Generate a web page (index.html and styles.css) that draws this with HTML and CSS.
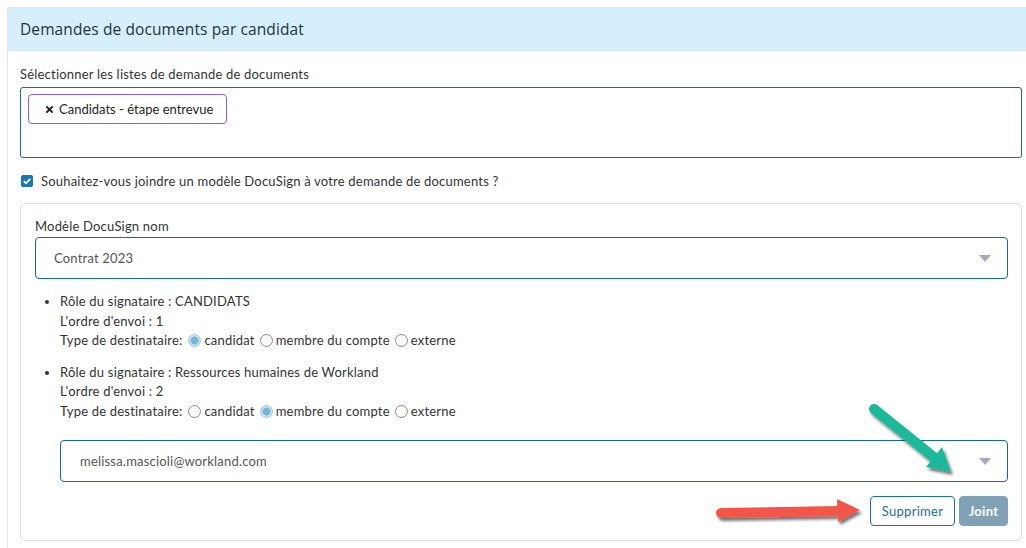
FILE: index.html
```html
<!DOCTYPE html>
<html>
<head>
  <meta charset="utf-8">
  <title>Demandes de documents</title>
  <link rel="stylesheet" href="styles.css">
</head>
<body>
  <div class="card">
    <div class="card-header">Demandes de documents par candidat</div>

    <div class="card-body">
      <label class="field-label">Sélectionner les listes de demande de documents</label>
      <div class="multi-select">
        <span class="tag">
          <svg class="tag-remove" viewBox="0 0 10 10"><path d="M1.5 1.5l7 7M8.5 1.5l-7 7"/></svg>
          Candidats - étape entrevue
        </span>
      </div>

      <label class="check-row">
        <span class="checkbox">
          <svg viewBox="0 0 12 12"><path d="M2.8 6.2l2.2 2.1 4.2-4.4"/></svg>
        </span>
        Souhaitez-vous joindre un modèle DocuSign à votre demande de documents ?
      </label>

      <!-- DocuSign panel -->
      <div class="docusign-panel">
        <label class="field-label">Modèle DocuSign nom</label>
        <div class="select-box">
          <span>Contrat 2023</span>
          <span class="caret"></span>
        </div>

        <ul class="signer-list">
          <li>
            <div>Rôle du signataire : CANDIDATS</div>
            <div>L'ordre d'envoi : 1</div>
            <div class="radio-row">
              Type de destinataire:
              <span class="radio checked"></span>candidat
              <span class="radio"></span>membre du compte
              <span class="radio"></span>externe
            </div>
          </li>
          <li>
            <div>Rôle du signataire : Ressources humaines de Workland</div>
            <div>L'ordre d'envoi : 2</div>
            <div class="radio-row">
              Type de destinataire:
              <span class="radio"></span>candidat
              <span class="radio checked"></span>membre du compte
              <span class="radio"></span>externe
            </div>
          </li>
        </ul>

        <div class="select-box email-select">
          <span>melissa.mascioli@workland.com</span>
          <span class="caret"></span>
        </div>

        <div class="actions">
          <button class="btn-outline">Supprimer</button>
          <button class="btn-disabled">Joint</button>
        </div>
      </div>
    </div>
  </div>

  <!-- annotation arrows -->
  <svg class="annotations" viewBox="0 0 1026 548" width="1026" height="548">
    <defs>
      <filter id="shadow" x="-20%" y="-20%" width="140%" height="160%">
        <feDropShadow dx="2" dy="3" stdDeviation="1.6" flood-color="#000" flood-opacity="0.55"/>
      </filter>
    </defs>
    <g filter="url(#shadow)">
      <line x1="874" y1="409" x2="936" y2="459" stroke="#1fb89a" stroke-width="10" stroke-linecap="round"/>
      <polygon points="951,472 926,467 942,447" fill="#1fb89a"/>
      <line x1="721" y1="513" x2="840" y2="511" stroke="#f4544a" stroke-width="10" stroke-linecap="round"/>
      <polygon points="860,510 837,499 838,522" fill="#f4544a"/>
    </g>
  </svg>
</body>
</html>
```

FILE: styles.css
```css
body {
  margin: 0;
  background: #fff;
  font-family: Lato, "Open Sans", sans-serif;
  font-size: 13px;
  letter-spacing: 0.2px;
  color: #333;
  position: relative;
  width: 1026px;
  height: 548px;
  overflow: hidden;
}
.card {
  margin: 7px 0 0 7px;
  border: 1px solid #e1e4e8;
  border-right: none;
  border-radius: 3px 0 0 0;
  min-height: 560px;
}
.card-header {
  height: 42px;
  line-height: 42px;
  padding: 0 12px;
  background-color: #d5f0fc;
  border-bottom: 1px solid #dde2e6;
  font-family: "Open Sans", sans-serif;
  font-size: 15.5px;
  font-weight: 500;
  letter-spacing: 0.1px;
  color: #1c3440;
}
.card-body {
  padding: 14px 4px 0 12px;
}
.field-label {
  display: block;
  line-height: 18px;
  margin-bottom: 4px;
}
.multi-select {
  height: 71px;
  box-sizing: border-box;
  border: 1.5px solid #156b9e;
  border-radius: 3px;
  padding: 6px 7px;
}
.tag {
  display: inline-flex;
  align-items: center;
  gap: 5px;
  height: 30px;
  box-sizing: border-box;
  padding: 0 13px 0 16px;
  border: 1px solid #8a5cf0;
  border-radius: 4px;
  color: #1e1e1e;
  letter-spacing: 0;
}
.tag-remove {
  width: 9px;
  height: 9px;
  stroke: #222;
  stroke-width: 2.2;
  fill: none;
}
.check-row {
  display: flex;
  align-items: center;
  gap: 8px;
  margin-top: 14px;
  line-height: 18px;
}
.checkbox {
  width: 12px;
  height: 12px;
  margin-left: 1px;
  background-color: #1877ad;
  border-radius: 2px;
  display: flex;
}
.checkbox svg {
  width: 12px;
  height: 12px;
  stroke: #fff;
  stroke-width: 1.8;
  fill: none;
}
.docusign-panel {
  margin-top: 13px;
  border: 1px solid #dfe2e6;
  border-radius: 4px;
  padding: 13px 13px 14px 14px;
}
.docusign-panel .field-label {
  margin-bottom: 2px;
}
.select-box {
  height: 42px;
  box-sizing: border-box;
  border: 1.5px solid #156b9e;
  border-radius: 4px;
  padding: 0 16px 0 18px;
  display: flex;
  align-items: center;
  justify-content: space-between;
  color: #555;
}
.caret {
  width: 0;
  height: 0;
  border-left: 6px solid transparent;
  border-right: 6px solid transparent;
  border-top: 7px solid #a9a7b9;
}
.signer-list {
  margin: 13px 0 0 0;
  padding-left: 25px;
}
.signer-list li {
  line-height: 19.5px;
  margin-bottom: 12px;
}
.signer-list li:last-child {
  margin-bottom: 0;
}
.radio-row {
  display: flex;
  align-items: center;
}
.radio {
  width: 11px;
  height: 11px;
  border: 1px solid #8c8c8c;
  border-radius: 50%;
  margin: 0 3px 0 5px;
}
.radio-row .radio:first-of-type {
  margin-left: 6px;
}
.radio.checked {
  border-color: #9ac7e0;
  background: radial-gradient(circle, #78b5d6 0 3.5px, #cfe6f3 4.5px);
}
.email-select {
  margin: 19px 0 0 25px;
  padding-left: 19px;
}
.actions {
  display: flex;
  justify-content: flex-end;
  gap: 4px;
  margin-top: 14px;
}
button {
  font-family: Lato, "Open Sans", sans-serif;
  font-size: 13px;
  letter-spacing: 0.3px;
  height: 30px;
  border-radius: 4px;
  cursor: pointer;
}
.btn-outline {
  background: #fff;
  border: 1px solid #1a6fa3;
  color: #1a6fa3;
  padding: 0 6px;
  width: 85px;
}
.btn-disabled {
  background: #7fa2b4;
  border: 1px solid #7fa2b4;
  color: #fff;
  font-weight: bold;
  width: 49px;
  cursor: not-allowed;
}
.annotations {
  position: absolute;
  left: 0;
  top: 0;
  pointer-events: none;
}
```
